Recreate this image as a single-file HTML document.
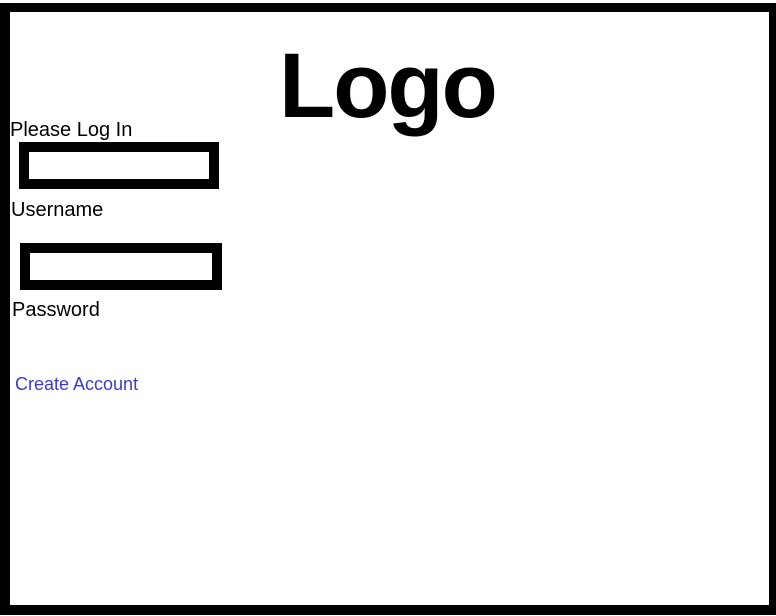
<!DOCTYPE html>
<html><head><style>
html,body{margin:0;padding:0;background:#fff;}
body{width:776px;height:616px;position:relative;overflow:hidden;font-family:"Liberation Sans",sans-serif;}
.outer{position:absolute;left:0;top:3px;width:776px;height:612px;background:#000;}
.frame{position:absolute;left:10px;top:12px;width:759px;height:593px;background:#fff;}
.t{position:absolute;white-space:nowrap;color:#000;}
.box{position:absolute;border:10px solid #000;background:#fff;box-sizing:border-box;}
</style></head><body>
<div class="outer"></div>
<div class="frame"></div>
<div class="t" style="left:279px;top:36px;font-size:92px;font-weight:bold;letter-spacing:-2px;line-height:100px;">Logo</div>
<div class="t" style="left:10px;top:118px;font-size:20px;line-height:24px;">Please Log In</div>
<div class="box" style="left:19px;top:142px;width:200px;height:47px;"></div>
<div class="t" style="left:11px;top:198px;font-size:20px;line-height:24px;">Username</div>
<div class="box" style="left:20px;top:243px;width:202px;height:47px;"></div>
<div class="t" style="left:12px;top:298px;font-size:20px;line-height:24px;">Password</div>
<div class="t" style="left:15px;top:373px;font-size:18px;line-height:22px;color:#3b3bcf;">Create Account</div>
</body></html>
